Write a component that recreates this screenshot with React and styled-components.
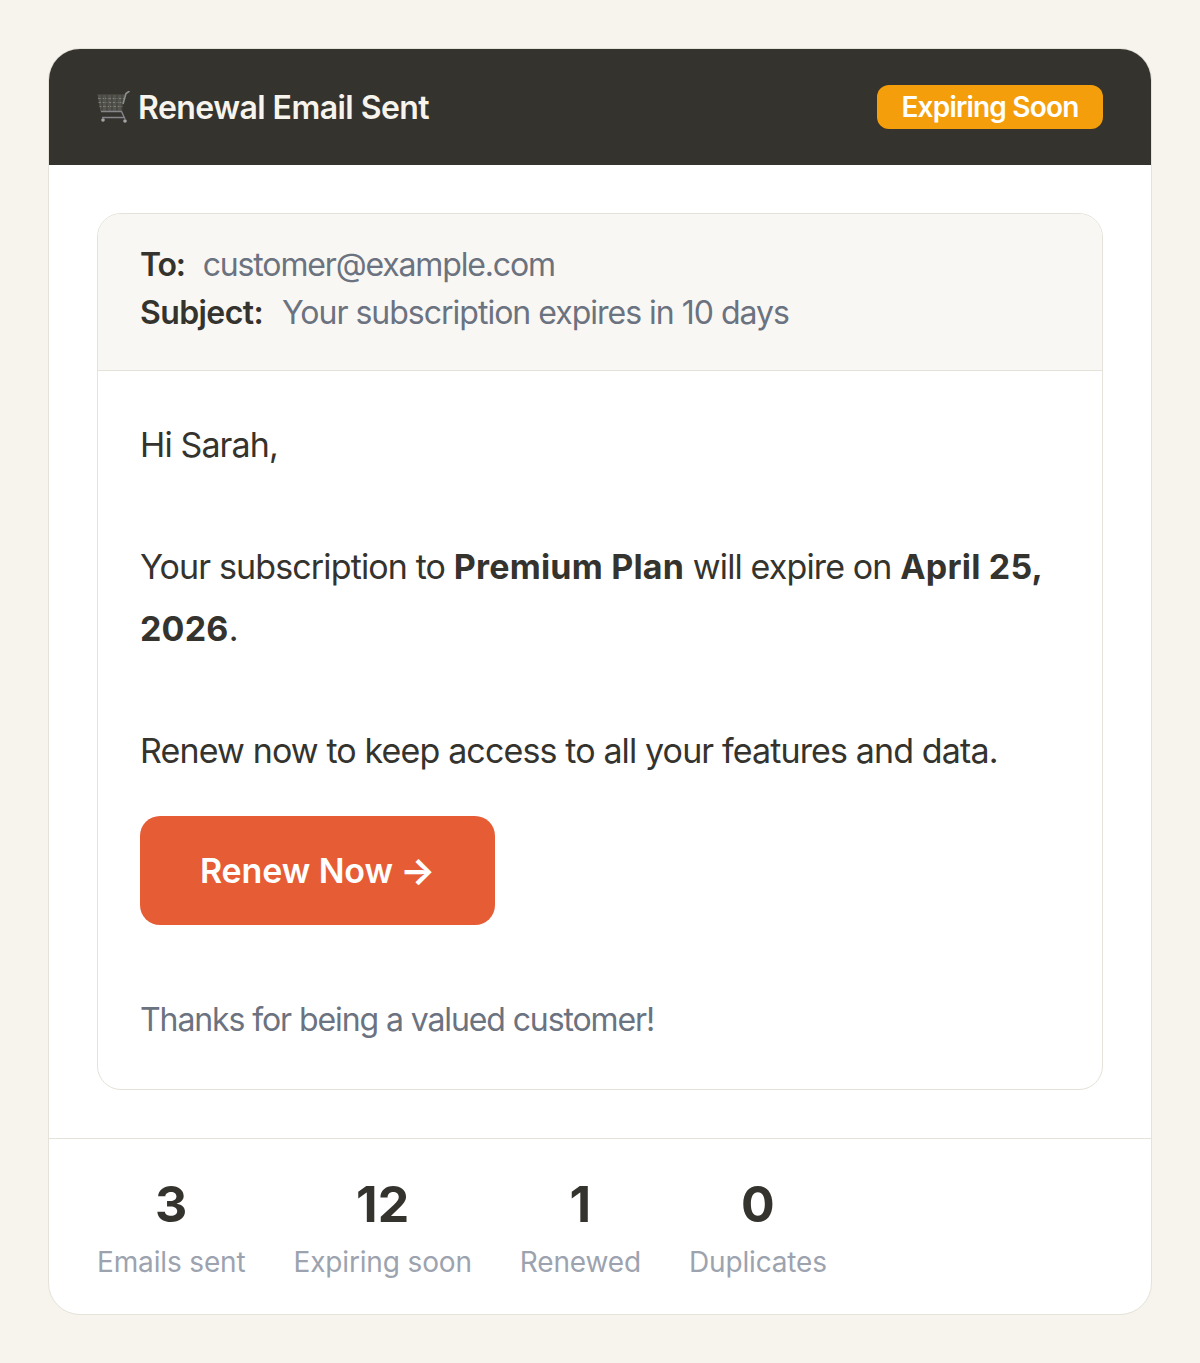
import React from 'react'
import styled, { createGlobalStyle } from 'styled-components'

const GlobalStyle = createGlobalStyle`
    html, body {
        margin: 0;
        background: #f7f4ed;
    }
    * {
        box-sizing: border-box;
    }
`

const Page = styled.div`
    padding: 48px;
    font-family: Inter, "Liberation Sans", sans-serif;
    color: #35332e;
`

const Card = styled.div`
    background: #fff;
    border: 1px solid #e5e2da;
    border-radius: 32px;
    overflow: hidden;
`

const Header = styled.header`
    height: 117px;
    margin: -1px -1px 0;
    padding: 0 49px 0 48px;
    background: #35332e;
    display: flex;
    align-items: center;
    justify-content: space-between;
`

const Title = styled.div`
    display: flex;
    align-items: center;
    gap: 8px;
    padding-top: 2px;
    font-size: 32px;
    font-weight: 600;
    letter-spacing: -0.55px;
    color: #f7f4ed;
`

const Badge = styled.span`
    height: 44px;
    width: 226px;
    padding: 1px 0 0;
    border-radius: 12px;
    background: #f59e0b;
    color: #fff;
    display: flex;
    align-items: center;
    justify-content: center;
    font-size: 28px;
    font-weight: 600;
    letter-spacing: -0.8px;
`

const Main = styled.div`
    padding: 48px 48px;
`

const Email = styled.div`
    border: 1px solid #e5e2da;
    border-radius: 24px;
    overflow: hidden;
`

const EmailMeta = styled.div`
    padding: 26px 42px 34px;
    background: #f9f7f3;
    border-bottom: 1px solid #e5e2da;
`

const MetaRow = styled.div`
    display: flex;
    gap: ${(p) => p.$gap}px;
    height: 48px;
    align-items: center;
    font-size: 32px;
    letter-spacing: ${(p) => p.$tracking}px;
    color: #6b7280;
`

const MetaLabel = styled.span`
    font-weight: 600;
    letter-spacing: ${(p) => p.$tracking}px;
    color: #35332e;
`

const EmailBody = styled.div`
    padding: 43px 42px 39px;
    font-size: 34px;
    line-height: 61.2px;
    letter-spacing: -0.87px;
`

const Para = styled.p`
    margin: 0 0 61.2px;
`

const Strong = styled.strong`
    letter-spacing: 0.2px;
`

const CtaPara = styled.p`
    margin: 0 0 35px;
`

const RenewButton = styled.a`
    display: inline-flex;
    align-items: center;
    justify-content: center;
    gap: 7px;
    width: 355px;
    height: 109px;
    border-radius: 20px;
    background: #e65c35;
    color: #fff;
    font-size: 34px;
    font-weight: 600;
    letter-spacing: -0.1px;
    margin-bottom: 64px;
`

const Arrow = styled.span`
    font-size: 37px;
    font-weight: 700;
`

const Thanks = styled.p`
    margin: 0;
    font-size: 32px;
    line-height: 61px;
    letter-spacing: -1.1px;
    color: #6b7280;
`

const Stats = styled.div`
    height: 176px;
    padding: 36px 48px 0;
    border-top: 1px solid #e5e2da;
    display: flex;
    gap: 48px;
`

const Stat = styled.div`
    text-align: center;
`

const StatValue = styled.div`
    font-size: 50px;
    font-weight: 700;
    line-height: 58px;
`

const StatLabel = styled.div`
    font-size: 28px;
    line-height: 58px;
    letter-spacing: -0.15px;
    color: #9ca3af;
`

function CartIcon () {
    return (
        <svg width="34" height="34" viewBox="0 0 34 34" fill="none">
            <path d="M1.500 3.500H29L25.500 20.500H4.500z" fill="#55544f" />
            <path d="M2 7.500h26.500M2.500 11.500h25M3.500 15.500h23" stroke="#7d7c76" strokeWidth="1.200" strokeDasharray="2.500 1" />
            <path d="M6 4v16M11 4v16M16 4v16M21 4v16M26 4v16" stroke="#3f3e39" strokeWidth="1" />
            <path d="M27 13l3-10.500 3.500-2.500" stroke="#8d8e90" strokeWidth="1.600" />
            <path d="M5 20.500h20.500l3.500 7.500M6 26.500h22.500" stroke="#85858a" strokeWidth="1.400" />
            <circle cx="7" cy="29" r="1.800" fill="#a5a5a5" />
            <circle cx="29" cy="30" r="1.800" fill="#a5a5a5" />
        </svg>
    )
}

const stats = [
    { value: '3', label: 'Emails sent' },
    { value: '12', label: 'Expiring soon' },
    { value: '1', label: 'Renewed' },
    { value: '0', label: 'Duplicates' },
]

export default function App () {
    return (
        <>
            <GlobalStyle />
            <Page>
                <Card>
                    <Header>
                        <Title><CartIcon />Renewal Email Sent</Title>
                        <Badge>Expiring Soon</Badge>
                    </Header>
                    <Main>
                        <Email>
                            <EmailMeta>
                                <MetaRow $gap={18} $tracking={-1.15}><MetaLabel $tracking={-1.2}>To:</MetaLabel> customer@example.com</MetaRow>
                                <MetaRow $gap={19} $tracking={-1}><MetaLabel $tracking={-0.6}>Subject:</MetaLabel> Your subscription expires in 10 days</MetaRow>
                            </EmailMeta>
                            <EmailBody>
                                <Para>Hi Sarah,</Para>
                                <Para>Your subscription to <Strong>Premium Plan</Strong> will expire on <Strong>April 25, 2026</Strong>.</Para>
                                <CtaPara>Renew now to keep access to all your features and data.</CtaPara>
                                <RenewButton>Renew Now <Arrow>→</Arrow></RenewButton>
                                <Thanks>Thanks for being a valued customer!</Thanks>
                            </EmailBody>
                        </Email>
                    </Main>
                    <Stats>
                        {stats.map((s) => (
                            <Stat key={s.label}>
                                <StatValue>{s.value}</StatValue>
                                <StatLabel>{s.label}</StatLabel>
                            </Stat>
                        ))}
                    </Stats>
                </Card>
            </Page>
        </>
    )
}
